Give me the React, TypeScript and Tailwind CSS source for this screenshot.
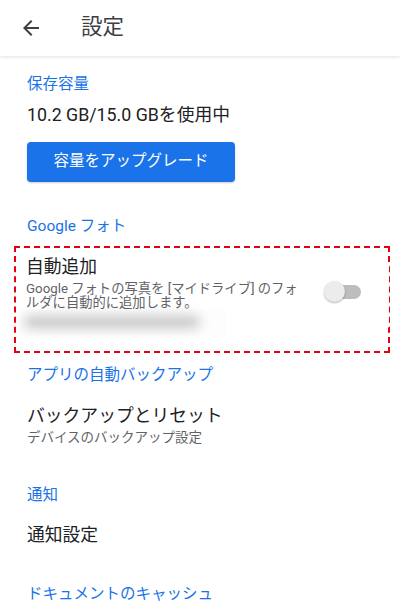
import React from "react";

const font = { fontFamily: "Roboto, 'Noto Sans CJK JP', sans-serif" };

function Section({ children, className = "" }: { children: React.ReactNode; className?: string }) {
  return <div className={`text-[15.5px] leading-[20px] text-[#1a73e8] ${className}`}>{children}</div>;
}

export default function App() {
  return (
    <div className="w-[400px] h-[606px] bg-white overflow-hidden relative" style={font}>
      <div className="h-[56px] flex items-center bg-white shadow-[0_1px_3px_rgba(0,0,0,0.12)] relative z-10">
        <svg width="24" height="24" viewBox="0 0 24 24" className="ml-[19px]">
          <path d="M20 11H7.83l5.59-5.59L12 4l-8 8 8 8 1.41-1.41L7.83 13H20v-2z" fill="#3c4043" />
        </svg>
        <div className="ml-[38px] text-[21.5px] text-[#3c4043] leading-[28px] mb-[2px]">設定</div>
      </div>
      <div className="flex flex-col">
        <div className="pl-[27px] flex flex-col">
          <Section className="mt-[18px]">保存容量</Section>
          <div className="mt-[9px] text-[17.8px] leading-[24px] text-[#202124]">10.2 GB/15.0 GBを使用中</div>
          <button className="mt-[15px] w-[208px] h-[40px] rounded-[4px] bg-[#1a73e8] text-white text-[15.5px] shadow-[0_1px_2px_rgba(0,0,0,0.2)]">
            容量をアップグレード
          </button>
          <Section className="mt-[34px]">Google フォト</Section>
        </div>
        <div className="mt-[10px] ml-[14px] w-[376px] h-[107px] border-[2.5px] border-dashed border-[#e60012] relative">
          <div className="absolute left-[4px] top-[62px] w-[206px] h-[26px] bg-[#fdfdfd]">
            <div className="absolute left-[4px] top-[6px] w-[176px] h-[12px] rounded-full bg-[#c4c4c4] blur-[6px]" />
          </div>
          <div className="absolute left-[281px] top-[14px] w-[92px] h-[66px] bg-white shadow-[0_0_2px_rgba(0,0,0,0.04)] rounded-[2px]">
            <div className="absolute left-[33px] top-[23px] w-[31px] h-[14px] rounded-full bg-[#bdbdbd]" />
            <div className="absolute left-[27px] top-[19px] w-[21px] h-[21px] rounded-full bg-[#ececec] shadow-[0_1px_2px_rgba(0,0,0,0.3)]" />
          </div>
          <div className="relative pl-[10px] pt-[7px]">
            <div className="text-[17.8px] leading-[24px] text-[#202124]">自動追加</div>
            <div className="mt-[3px] text-[13.3px] leading-[14px] text-[#5f6368] w-[290px]">
              Google フォトの写真を [マイドライブ] のフォ<br />ルダに自動的に追加します。
            </div>
          </div>
        </div>
        <div className="pl-[27px] flex flex-col">
          <Section className="mt-[12px]">アプリの自動バックアップ</Section>
          <div className="mt-[19px] text-[17.8px] leading-[24px] text-[#202124]">バックアップとリセット</div>
          <div className="text-[13.5px] leading-[18px] text-[#5f6368]">デバイスのバックアップ設定</div>
          <Section className="mt-[39px]">通知</Section>
          <div className="mt-[18px] text-[17.8px] leading-[24px] text-[#202124]">通知設定</div>
          <Section className="mt-[37px]">ドキュメントのキャッシュ</Section>
        </div>
      </div>
    </div>
  );
}
